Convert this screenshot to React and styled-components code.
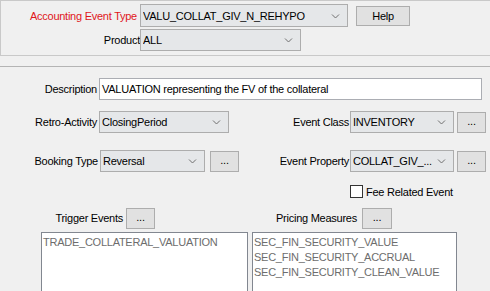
import React from "react";
import styled, { createGlobalStyle } from "styled-components";

const Global = createGlobalStyle`
  html, body { margin: 0; padding: 0; background: #f0f0f0; }
  body { font-family: "Liberation Sans", Arial, sans-serif; font-size: 11px; letter-spacing: -0.25px; color: #000; overflow: hidden; }
  * { box-sizing: border-box; }
`;

const Page = styled.div`
  width: 490px;
  height: 291px;
  overflow: hidden;
  background: #f0f0f0;
`;

const TopPanel = styled.div`
  width: 500px;
  height: 56px;
  border: 1px solid #c9c9c9;
  border-right: none;
  padding-top: 3px;
  display: flex;
  flex-direction: column;
  gap: 2px;
`;

const Row = styled.div`
  display: flex;
  align-items: center;
  height: ${(p) => p.$h || 22}px;
  margin-top: ${(p) => p.$mt || 0}px;
`;

const Label = styled.div`
  width: ${(p) => p.$w}px;
  padding-right: ${(p) => p.$pr || 0}px;
  text-align: right;
  white-space: nowrap;
  color: ${(p) => (p.$red ? "#e0161b" : "#000")};
  flex: none;
`;

const ComboBox = styled.div`
  width: ${(p) => p.$w}px;
  height: ${(p) => p.$h || 22}px;
  background: #e5e7e9;
  border: 1px solid #adadad;
  display: flex;
  align-items: center;
  padding-left: 2px;
  padding-right: 7px;
  flex: none;
  margin-left: ${(p) => p.$ml || 0}px;
`;

const ComboText = styled.span`
  flex: 1;
  white-space: nowrap;
  overflow: hidden;
`;

const Chevron = () => (
  <svg width="9" height="6" viewBox="0 0 9 6">
    <path d="M1 1.5 L4.5 5 L8 1.5" fill="none" stroke="#707070" strokeWidth="1" />
  </svg>
);

const Button = styled.div`
  width: ${(p) => p.$w}px;
  height: ${(p) => p.$h || 21}px;
  margin-left: ${(p) => p.$ml || 0}px;
  background: #e1e1e1;
  border: 1px solid #adadad;
  display: flex;
  align-items: center;
  justify-content: center;
  flex: none;
  padding-bottom: ${(p) => (p.$dots ? 3 : 0)}px;
`;

const Separator = styled.div`
  margin-top: 10px;
  height: 1px;
  background: #b4b4b4;
`;

const Lower = styled.div`
  display: flex;
  flex-direction: column;
`;

const TextInput = styled.div`
  width: ${(p) => p.$w}px;
  height: 22px;
  background: #fff;
  border: 1px solid #abadb3;
  display: flex;
  align-items: center;
  padding-left: 2px;
  white-space: nowrap;
  flex: none;
`;

const Spacer = styled.div`
  width: ${(p) => p.$w}px;
  flex: none;
`;

const CheckBox = styled.div`
  width: 13px;
  height: 13px;
  border: 1px solid #333;
  background: #fff;
  flex: none;
`;

const CheckLabel = styled.span`
  margin-left: 3px;
  white-space: nowrap;
`;

const Lists = styled.div`
  display: flex;
  margin-top: 3px;
  padding-left: 41px;
  gap: 4px;
`;

const ListBox = styled.div`
  width: ${(p) => p.$w}px;
  height: 90px;
  background: #fff;
  border: 1px solid #828790;
  padding: 2px 1px;
  color: #6d6d6d;
  line-height: 15px;
  white-space: nowrap;
  overflow: hidden;
  flex: none;
`;

function Combo({ w, h, ml, children }) {
  return (
    <ComboBox $w={w} $h={h} $ml={ml}>
      <ComboText>{children}</ComboText>
      <Chevron />
    </ComboBox>
  );
}

export default function App() {
  return (
    <Page>
      <Global />
      <TopPanel>
        <Row $h={23}>
          <Label $w={139} $pr={3} $red>Accounting Event Type</Label>
          <Combo w={208} h={23}>VALU_COLLAT_GIV_N_REHYPO</Combo>
          <Button $w={54} $h={20} $ml={8}>Help</Button>
        </Row>
        <Row $h={22}>
          <Label $w={139}>Product</Label>
          <Combo w={161}>ALL</Combo>
        </Row>
      </TopPanel>
      <Separator />
      <Lower>
        <Row $mt={11}>
          <Label $w={99} $pr={2}>Description</Label>
          <TextInput $w={383}>VALUATION representing the FV of the collateral</TextInput>
        </Row>
        <Row $mt={11}>
          <Label $w={99} $pr={2}>Retro-Activity</Label>
          <Combo w={130}>ClosingPeriod</Combo>
          <Label $w={121} $pr={1}>Event Class</Label>
          <Combo w={104}>INVENTORY</Combo>
          <Button $w={29} $ml={3} $dots>...</Button>
        </Row>
        <Row $mt={17}>
          <Label $w={100} $pr={2}>Booking Type</Label>
          <Combo w={105}>Reversal</Combo>
          <Button $w={29} $ml={5} $dots>...</Button>
          <Label $w={111} $pr={1}>Event Property</Label>
          <Combo w={104}>COLLAT_GIV_...</Combo>
          <Button $w={29} $ml={3} $dots>...</Button>
        </Row>
        <Row $h={13} $mt={13}>
          <Spacer $w={350} />
          <CheckBox />
          <CheckLabel>Fee Related Event</CheckLabel>
        </Row>
        <Row $mt={9}>
          <Label $w={126} $pr={3}>Trigger Events</Label>
          <Button $w={29} $dots>...</Button>
          <Label $w={207} $pr={5}>Pricing Measures</Label>
          <Button $w={30} $dots>...</Button>
        </Row>
        <Lists>
          <ListBox $w={207}>TRADE_COLLATERAL_VALUATION</ListBox>
          <ListBox $w={205}>
            SEC_FIN_SECURITY_VALUE<br />
            SEC_FIN_SECURITY_ACCRUAL<br />
            SEC_FIN_SECURITY_CLEAN_VALUE
          </ListBox>
        </Lists>
      </Lower>
    </Page>
  );
}
